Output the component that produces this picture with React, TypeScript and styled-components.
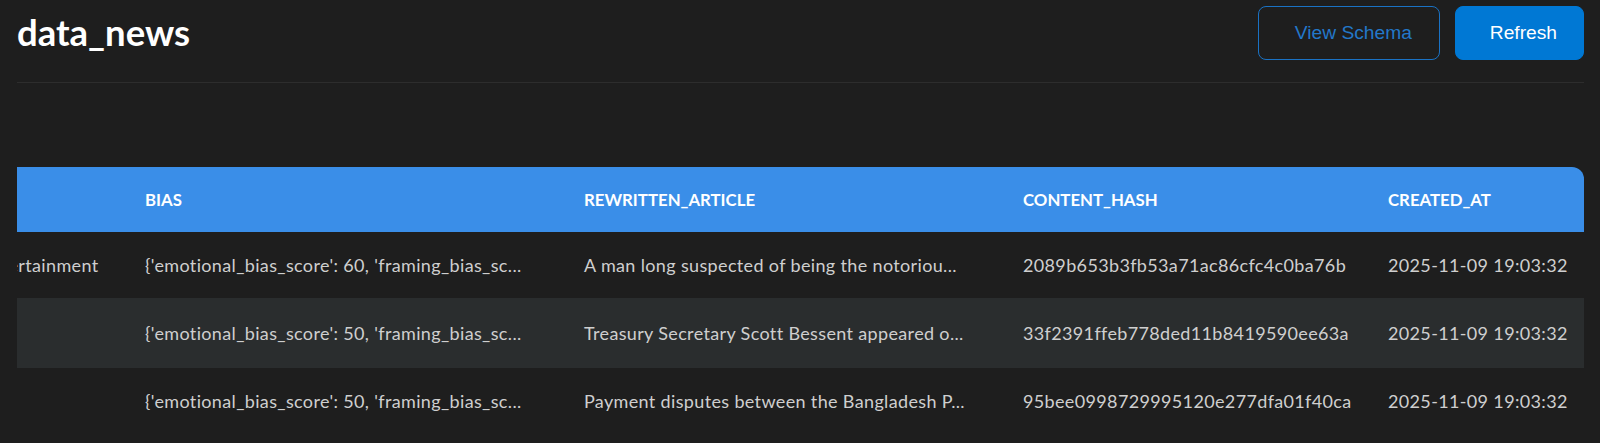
import React, { useLayoutEffect, useRef } from 'react';
import styled, { createGlobalStyle, css } from 'styled-components';

const GlobalStyle = createGlobalStyle`
  html, body {
    margin: 0;
    padding: 0;
    background: #1e1e1e;
  }
  body {
    font-family: Lato, "Open Sans", sans-serif;
    color: #d0d0d0;
    overflow: hidden;
  }
  * { box-sizing: border-box; }
`;

const Page = styled.div`
  padding: 0 16px 0 17px;
`;

const Header = styled.header`
  display: flex;
  align-items: center;
  justify-content: space-between;
  padding: 6px 0 22px;
  border-bottom: 1px solid #2d2d2d;
`;

const Title = styled.h1`
  margin: 0;
  font-family: Lato, "Open Sans", sans-serif;
  font-weight: 700;
  font-size: 36.5px;
  color: #ffffff;
  line-height: 1.2;
`;

const Actions = styled.div`
  display: flex;
  gap: 15px;
`;

const Button = styled.button<{ $variant: 'outline' | 'primary' }>`
  height: 54px;
  border-radius: 8px;
  font-family: "Liberation Sans", Arial, sans-serif;
  font-size: 19.2px;
  cursor: pointer;
  ${(p) =>
    p.$variant === 'primary'
      ? css`
          padding: 0 26px 0 34px;
          background: #0078d4;
          color: #ffffff;
          border: 1px solid #0078d4;
        `
      : css`
          padding: 0 27px 0 36px;
          background: transparent;
          color: #2378c9;
          border: 1px solid #1a72c4;
        `}
`;

const TableScroll = styled.div`
  margin-top: 84px;
  overflow-x: auto;
  scrollbar-width: none;
  &::-webkit-scrollbar {
    display: none;
  }
`;

const Table = styled.table<{ $width: number }>`
  border-collapse: separate;
  border-spacing: 0;
  table-layout: fixed;
  width: ${(p) => p.$width}px;
`;

const Col = styled.col<{ $w: number }>`
  width: ${(p) => p.$w}px;
`;

const HeadCell = styled.th`
  height: 65px;
  padding: 0 16px;
  background: #3a8ee8;
  color: #ffffff;
  text-align: left;
  font-family: Lato, "Open Sans", sans-serif;
  font-weight: 700;
  font-size: 16.8px;
  text-transform: uppercase;
  white-space: nowrap;
  overflow: hidden;
  &:first-child {
    border-top-left-radius: 12px;
  }
  &:last-child {
    border-top-right-radius: 12px;
  }
`;

const Row = styled.tr<{ $alt: boolean }>`
  background: ${(p) => (p.$alt ? '#2a2d2e' : 'transparent')};
`;

const Cell = styled.td<{ $tall: boolean }>`
  height: ${(p) => (p.$tall ? 70 : 66)}px;
  padding: 0 16px;
  font-size: 18px;
  letter-spacing: 0.35px;
  color: #cfcfcf;
  white-space: nowrap;
  overflow: hidden;
  text-overflow: ellipsis;
`;

type Column = { key: string; label: string; width: number };

const columns: Column[] = [
  { key: 'id', label: 'id', width: 80 },
  { key: 'title', label: 'title', width: 420 },
  { key: 'tag', label: 'tag', width: 164 },
  { key: 'bias', label: 'bias', width: 439 },
  { key: 'rewritten_article', label: 'rewritten_article', width: 439 },
  { key: 'content_hash', label: 'content_hash', width: 365 },
  { key: 'created_at', label: 'created_at', width: 212 },
];

type Rec = Record<string, string>;

const rows: Rec[] = [
  {
    id: '101',
    title: 'Man suspected of being notorious figure',
    tag: 'Entertainment',
    bias: "{'emotional_bias_score': 60, 'framing_bias_sc...",
    rewritten_article: 'A man long suspected of being the notoriou...',
    content_hash: '2089b653b3fb53a71ac86cfc4c0ba76b',
    created_at: '2025-11-09 19:03:32',
  },
  {
    id: '102',
    title: 'Bessent on tariffs',
    tag: '',
    bias: "{'emotional_bias_score': 50, 'framing_bias_sc...",
    rewritten_article: 'Treasury Secretary Scott Bessent appeared o...',
    content_hash: '33f2391ffeb778ded11b8419590ee63a',
    created_at: '2025-11-09 19:03:32',
  },
  {
    id: '103',
    title: 'Bangladesh power payment disputes',
    tag: '',
    bias: "{'emotional_bias_score': 50, 'framing_bias_sc...",
    rewritten_article: 'Payment disputes between the Bangladesh P...',
    content_hash: '95bee0998729995120e277dfa01f40ca',
    created_at: '2025-11-09 19:03:32',
  },
];

export default function App() {
  const scrollRef = useRef<HTMLDivElement>(null);
  const tableWidth = columns.reduce((s, c) => s + c.width, 0);

  useLayoutEffect(() => {
    const el = scrollRef.current;
    if (el) el.scrollLeft = el.scrollWidth;
  }, []);

  return (
    <>
      <GlobalStyle />
      <Page>
        <Header>
          <Title>data_news</Title>
          <Actions>
            <Button $variant="outline">View Schema</Button>
            <Button $variant="primary">Refresh</Button>
          </Actions>
        </Header>
        <TableScroll ref={scrollRef}>
          <Table $width={tableWidth}>
            <colgroup>
              {columns.map((c) => (
                <Col key={c.key} $w={c.width} />
              ))}
            </colgroup>
            <thead>
              <tr>
                {columns.map((c) => (
                  <HeadCell key={c.key}>{c.label}</HeadCell>
                ))}
              </tr>
            </thead>
            <tbody>
              {rows.map((r, i) => (
                <Row key={r.id} $alt={i === 1}>
                  {columns.map((c) => (
                    <Cell key={c.key} $tall={i === 1}>
                      {r[c.key]}
                    </Cell>
                  ))}
                </Row>
              ))}
            </tbody>
          </Table>
        </TableScroll>
      </Page>
    </>
  );
}
